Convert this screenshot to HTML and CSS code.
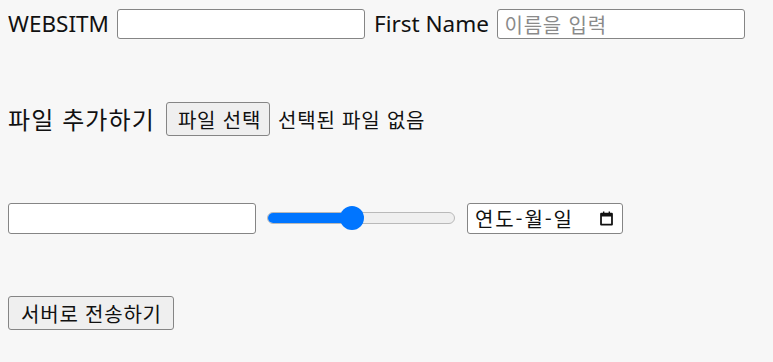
FILE: index.html
```html
<!DOCTYPE html>
<html lang="ko">
<head>
<meta charset="utf-8">
<title>Form</title>
<link rel="stylesheet" href="styles.css">
</head>
<body>
<form class="form">
  <div class="row row-1">
    <label class="label" for="site">WEBSITM</label>
    <input class="field" id="site" type="text">
    <label class="label" for="fname">First Name</label>
    <input class="field" id="fname" type="text" placeholder="이름을 입력">
  </div>
  <div class="row row-2">
    <span class="label label-ko">파일 추가하기</span>
    <span class="file">
      <button class="btn btn-file" type="button">파일 선택</button>
      <span class="file-status">선택된 파일 없음</span>
    </span>
  </div>
  <div class="row row-3">
    <input class="field" type="text">
    <div class="slider">
      <div class="track"><div class="fill"></div></div>
      <div class="thumb"></div>
    </div>
    <div class="date">
      <span class="date-text">연도-월-일</span>
      <svg class="cal" viewBox="0 0 24 24" width="17" height="17" aria-hidden="true">
        <path d="M7 2h2v2h6V2h2v2h2.5A1.5 1.5 0 0 1 21 5.5v15a1.5 1.5 0 0 1-1.5 1.5h-15A1.5 1.5 0 0 1 3 20.5v-15A1.5 1.5 0 0 1 4.5 4H7zM5.5 9v10.5h13V9z" fill="#111"/>
      </svg>
    </div>
  </div>
  <div class="row row-4">
    <button class="btn btn-submit" type="submit">서버로 전송하기</button>
  </div>
</form>
</body>
</html>
```
FILE: styles.css
```css
html, body {
  background: #f7f7f7;
}
body {
  margin: 8px;
  font-family: "Noto Sans", "Noto Sans CJK KR", sans-serif;
  color: #111;
}
.form {
  display: flex;
  flex-direction: column;
  gap: 61px;
}
.row {
  display: flex;
  align-items: center;
  height: 34px;
  gap: 9px;
}
.row-1 { margin-top: -1px; gap: 8.5px; }
.row-2 { gap: 11px; }
.row-3 { margin-top: 4px; gap: 11px; }
.label {
  font-size: 22.5px;
  line-height: 32px;
  white-space: nowrap;
}
.label-ko {
  font-family: "Noto Sans CJK KR", sans-serif;
  font-size: 24px;
  letter-spacing: 1.1px;
}
.field {
  box-sizing: border-box;
  width: 248px;
  height: 30px;
  margin: 0;
  padding: 1px 6px;
  border: 1.5px solid #858585;
  border-radius: 3px;
  background: #fff;
  font-family: "Noto Sans CJK KR", sans-serif;
  font-size: 20px;
  letter-spacing: 0.8px;
  color: #111;
}
.row-3 .field { height: 31px; }
.field::placeholder {
  color: #8a8a8a;
}
.file {
  display: flex;
  align-items: center;
  gap: 8px;
}
.btn {
  box-sizing: border-box;
  height: 34px;
  margin: 0;
  padding: 0 11px 0 12px;
  border: 1.5px solid #858585;
  border-radius: 3px;
  background: #efefef;
  font-family: "Noto Sans CJK KR", sans-serif;
  font-size: 20px;
  letter-spacing: 0.8px;
  color: #111;
  white-space: nowrap;
}
.btn-file {
  padding: 0 8px 0 11px;
}
.file-status {
  font-family: "Noto Sans CJK KR", sans-serif;
  font-size: 20px;
  letter-spacing: 0.8px;
  white-space: nowrap;
}
.slider {
  position: relative;
  width: 188px;
  height: 24px;
  display: flex;
  align-items: center;
}
.track {
  position: relative;
  box-sizing: border-box;
  width: 100%;
  height: 12px;
  border: 1.5px solid #b9b9b9;
  border-radius: 6px;
  background: #efefef;
  overflow: hidden;
}
.fill {
  width: 48%;
  height: 12px;
  margin: -1.5px 0 0 -1.5px;
  background: #0075ff;
}
.thumb {
  position: absolute;
  left: 73px;
  top: 0;
  width: 24px;
  height: 24px;
  border-radius: 50%;
  background: #0075ff;
}
.date {
  box-sizing: border-box;
  width: 156px;
  height: 31px;
  display: flex;
  align-items: center;
  justify-content: space-between;
  padding: 0 7px 0 7px;
  border: 1.5px solid #858585;
  border-radius: 3px;
  background: #fff;
  margin-left: 1px;
}
.date-text {
  font-family: "Noto Sans CJK KR", sans-serif;
  font-size: 20px;
  letter-spacing: 1.9px;
  color: #111;
}
.cal { display: block; }
```
